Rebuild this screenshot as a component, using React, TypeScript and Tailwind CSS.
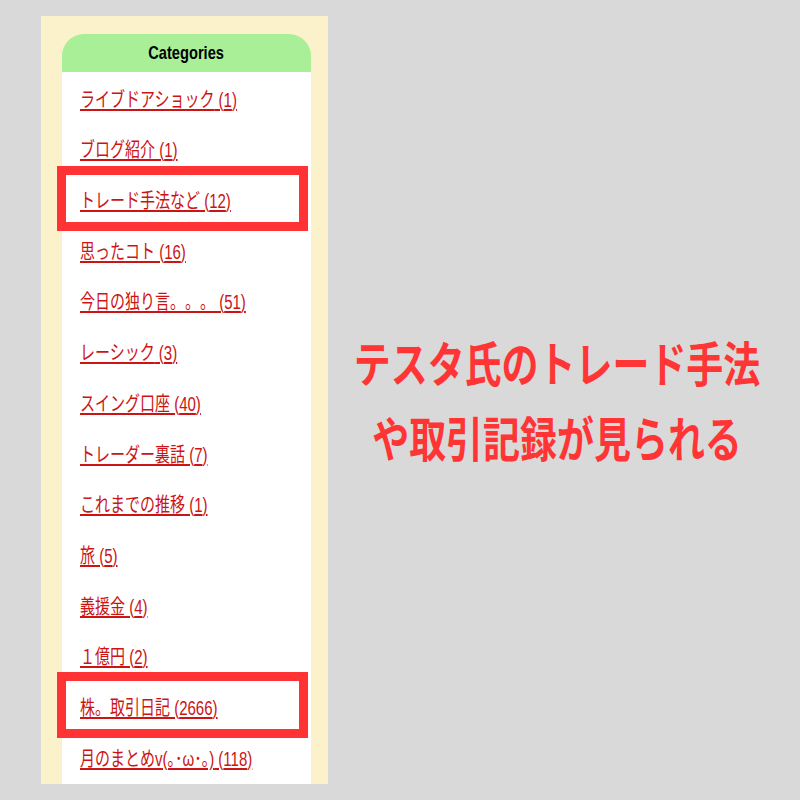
const categories = [
  { name: "ライブドアショック", count: 1 },
  { name: "ブログ紹介", count: 1 },
  { name: "トレード手法など", count: 12 },
  { name: "思ったコト", count: 16 },
  { name: "今日の独り言。。。", count: 51 },
  { name: "レーシック", count: 3 },
  { name: "スイング口座", count: 40 },
  { name: "トレーダー裏話", count: 7 },
  { name: "これまでの推移", count: 1 },
  { name: "旅", count: 5 },
  { name: "義援金", count: 4 },
  { name: "１億円", count: 2 },
  { name: "株。取引日記", count: 2666 },
  { name: "月のまとめv(｡･ω･｡)", count: 118 },
];

export default function App() {
  return (
    <div className="w-[800px] h-[800px] bg-[#d9d9d9] flex overflow-hidden">
      <div className="relative ml-[41px] mt-[16px] w-[287px] h-[768px] bg-[#fbf2cc] pl-[21px] pr-[17px] pt-[18px] flex flex-col">
        <div className="h-[42px] rounded-t-[22px] bg-[#a8ef98] flex items-center justify-center">
          <span className="inline-block scale-x-[0.77] font-bold text-[19px] text-black font-['Liberation_Sans',sans-serif]">
            Categories
          </span>
        </div>
        <ul className="flex-1 bg-white pl-[18px] pt-[2px]">
          {categories.map((c) => (
            <li key={c.name} className="h-[50.7px] flex items-center">
              <a
                href="#"
                className="inline-block origin-left scale-x-[0.75] whitespace-nowrap text-[20px] leading-none text-[#cc1414] underline underline-offset-2 [text-spacing-trim:space-all] font-['Liberation_Sans','Noto_Sans_CJK_JP',sans-serif]"
              >
                {c.name} ({c.count})
              </a>
            </li>
          ))}
        </ul>
        <div className="absolute left-[16px] top-[150px] w-[251px] h-[65px] border-[9px] border-[#ff3333]" />
        <div className="absolute left-[16px] top-[656px] w-[251px] h-[66px] border-[9px] border-[#ff3333]" />
      </div>
      <div className="flex-1 min-w-0 flex flex-col items-center justify-center pr-[14px] pb-[2px]">
        <p className="scale-x-[0.77] whitespace-nowrap text-[48px] leading-[75px] font-bold text-[#ff3535] text-center font-['Noto_Sans_CJK_JP',sans-serif]">
          テスタ氏のトレード手法
          <br />
          や取引記録が見られる
        </p>
      </div>
    </div>
  );
}
